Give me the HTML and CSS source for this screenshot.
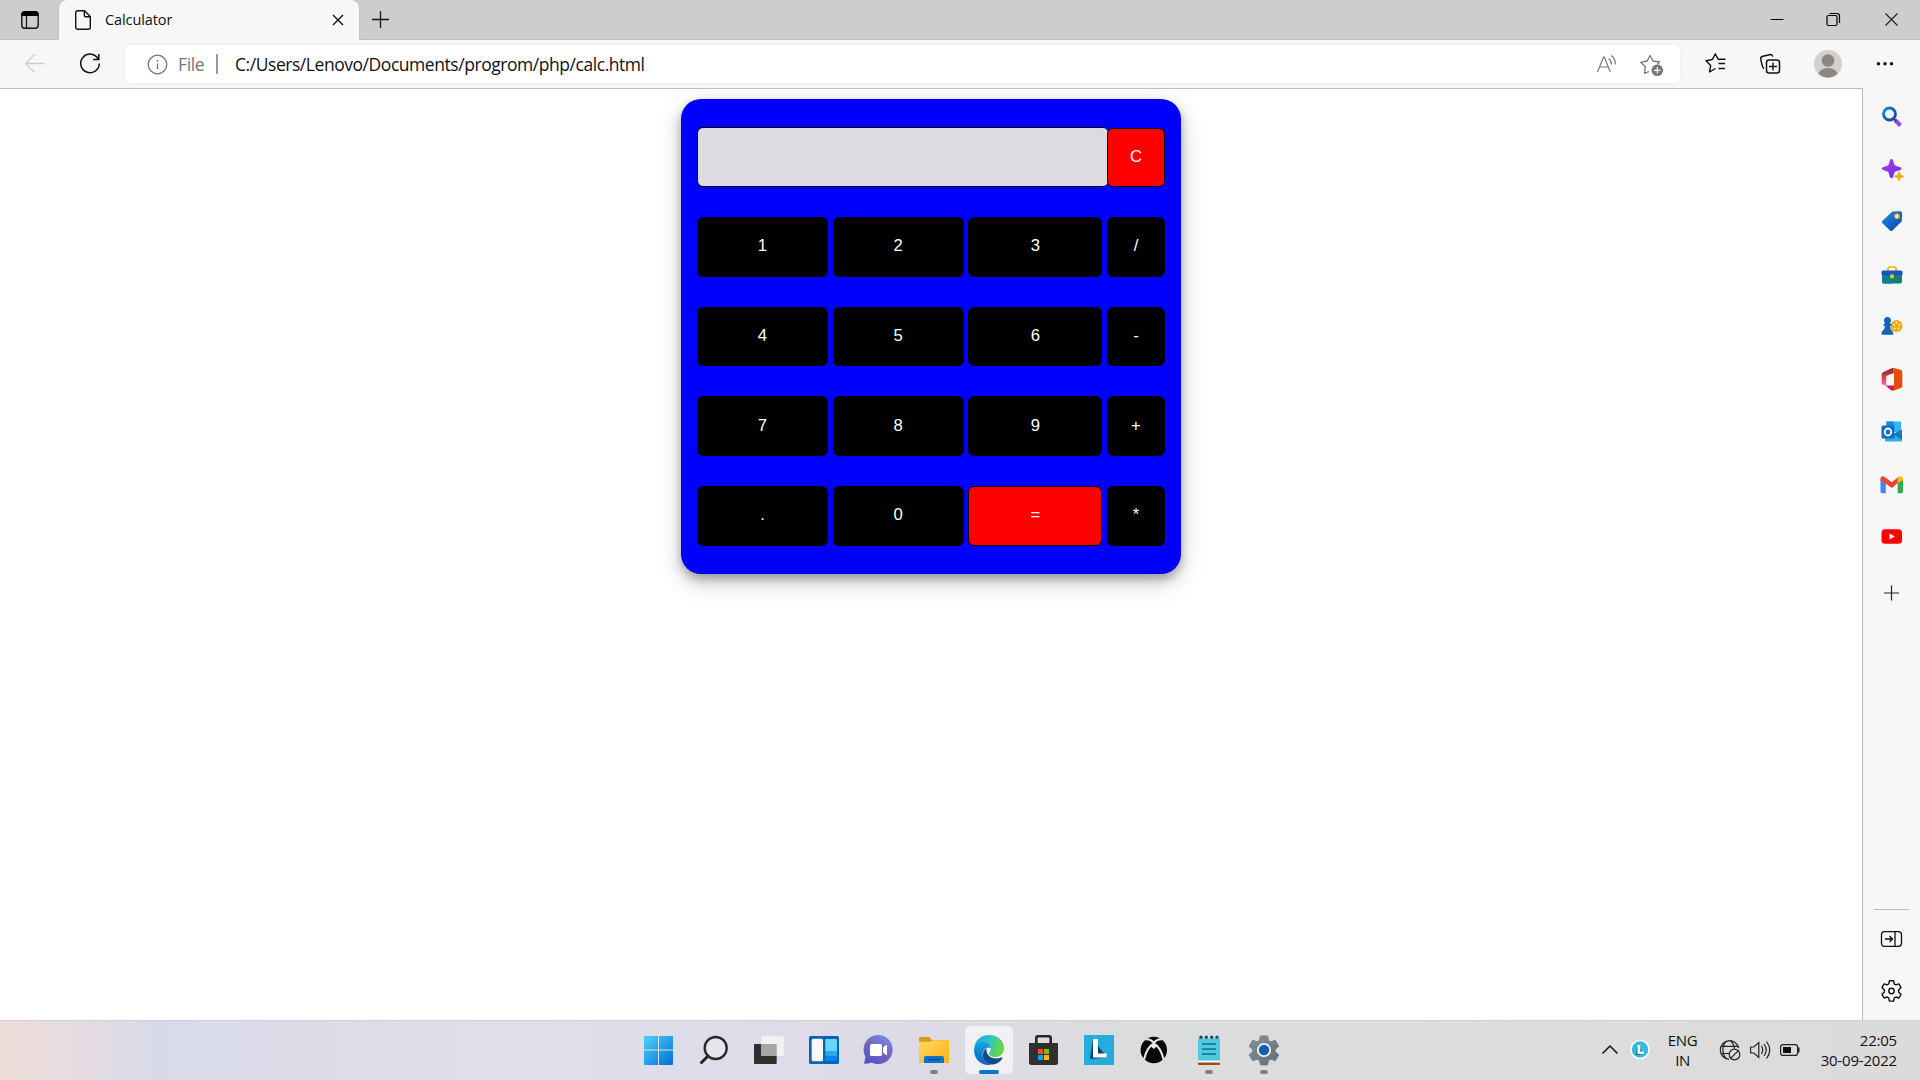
FILE: index.html
```html
<!DOCTYPE html>
<html lang="en">
<head>
<meta charset="utf-8">
<title>Calculator</title>
<link rel="stylesheet" href="styles.css">
</head>
<body>
<header class="tabstrip">
  <svg class="tab-actions" viewBox="0 0 59 40"><rect x="21.8" y="11.8" width="16.4" height="16.4" rx="3" fill="none" stroke="#111" stroke-width="1.4"/><path d="M21.5 16v-1.500a3.500 3.500 0 0 1 3.500-3.500h10a3.500 3.500 0 0 1 3.500 3.500V16z" fill="#000"/><path d="M26.500 16v12" stroke="#111" stroke-width="1.200"/></svg>
  <div class="tab">
    <svg class="tab-doc" viewBox="0 0 18 22"><path d="M3.500 1.700h7l5.800 5.800v10.800a2 2 0 0 1-2 2H3.700a2 2 0 0 1-2-2V3.700a2 2 0 0 1 1.800-2zM10.300 2v4.200a1.500 1.500 0 0 0 1.500 1.500H16" fill="none" stroke="#111" stroke-width="1.400"/></svg>
    <span class="tab-title">Calculator</span>
    <svg class="tab-close" viewBox="0 0 12 12"><path d="M1 1l10 10M11 1L1 11" stroke="#111" stroke-width="1.400"/></svg>
  </div>
  <svg class="new-tab" viewBox="0 0 43 40"><path d="M13 19.500h17M21.500 11v17" stroke="#111" stroke-width="1.300"/></svg>
  <div class="window-buttons">
    <svg viewBox="0 0 57.500 40"><path d="M22.500 19.500h13" stroke="#000"/></svg>
    <svg viewBox="0 0 57.500 40"><rect x="22" y="15.500" width="10" height="10" rx="1.500" fill="none" stroke="#000" stroke-width="1.200"/><path d="M24.500 13.500h7.500a2.500 2.500 0 0 1 2.500 2.500v7" fill="none" stroke="#000" stroke-width="1.200"/></svg>
    <svg viewBox="0 0 57.500 40"><path d="M22.500 13.500l12 12M34.500 13.500l-12 12" stroke="#222" stroke-width="1.200"/></svg>
  </div>
</header>

<nav class="toolbar">
  <svg class="nav-back" viewBox="0 0 70 48"><path d="M44.500 23.500H26M34.500 14.500l-9 9 9 9" fill="none" stroke="#ccc" stroke-width="1.400"/></svg>
  <svg class="nav-reload" viewBox="0 0 40 48"><path d="M28.300 19.200A9.300 9.300 0 1 0 29.300 23.500M28.800 14v5.500h-5.600" fill="none" stroke="#111" stroke-width="1.500"/></svg>
  <div class="address">
    <svg class="info" viewBox="0 0 25 37"><circle cx="12.500" cy="18.500" r="9.300" fill="none" stroke="#767676" stroke-width="1.300"/><path d="M12.500 17.500v5.500M12.500 14v1.700" stroke="#767676" stroke-width="1.400"/></svg>
    <span class="scheme">File</span>
    <span class="separator"></span>
    <span class="url">C:/Users/Lenovo/Documents/progrom/php/calc.html</span>
    <svg class="read-aloud" viewBox="0 0 45 37"><g fill="none" stroke="#777" stroke-width="1.200"><path d="M13.500 26l6-15h.8l6 15M15.700 21h8.500M24.500 12.500q3 2 3 6M27 9.500q4.500 3 4.300 9"/></g></svg>
    <svg class="add-favorite" viewBox="0 0 46 37"><path d="M20 25.500l-4.500 1.800.8-6.500-4.600-4.500 6.500-1.300L21 9.500l3 5.500 6.500 1-2.200 2.500" fill="none" stroke="#777" stroke-width="1.300" stroke-linejoin="round"/><circle cx="28.300" cy="24.300" r="5.800" fill="#777"/><path d="M25 24.300h6.600M28.300 21v6.600" stroke="#fff" stroke-width="1.200"/></svg>
  </div>
  <svg class="favorites" viewBox="0 0 70 48"><path d="M35.500 28.500l-6 3.500 1.200-6.500-4.700-4.800 6.300-1.200 3-5.600 2.800 5.400h7.400M38.500 23.500H45M38.500 28.500H45" fill="none" stroke="#111" stroke-width="1.400" stroke-linejoin="round"/></svg>
  <svg class="collections" viewBox="0 0 40 48"><rect x="16.500" y="20" width="13" height="13" rx="2.500" fill="none" stroke="#111" stroke-width="1.500"/><path d="M23 22.500v8M19 26.500h8M14 28.500c-1.300-.6-1.500-1.500-1.700-2.500l-1.500-6.500c-.3-1.800.5-3 2-3.300l6.800-1.500c1.700-.4 2.800.3 3.200 2" fill="none" stroke="#111" stroke-width="1.400"/></svg>
  <svg class="profile" viewBox="0 0 76 48"><defs><clipPath id="face"><circle cx="38" cy="24" r="13.500"/></clipPath></defs><circle cx="38" cy="24" r="14" fill="#d2d0ce"/><g fill="#8a8683" clip-path="url(#face)"><circle cx="38" cy="20.500" r="6.300"/><ellipse cx="38" cy="36" rx="10" ry="8"/></g></svg>
  <svg class="more" viewBox="0 0 38 48"><g fill="#111"><circle cx="12.500" cy="23.700" r="1.700"/><circle cx="19" cy="23.700" r="1.700"/><circle cx="25.500" cy="23.700" r="1.700"/></g></svg>
</nav>

<div class="workspace">
  <main class="page">
    <form class="calculator">
      <div class="screen-row"><input class="display" type="text" aria-label="Display"><button class="key key-red" type="button">C</button></div>
      <div class="key-row"><button class="key" type="button">1</button><button class="key" type="button">2</button><button class="key" type="button">3</button><button class="key" type="button">/</button></div>
      <div class="key-row"><button class="key" type="button">4</button><button class="key" type="button">5</button><button class="key" type="button">6</button><button class="key" type="button">-</button></div>
      <div class="key-row"><button class="key" type="button">7</button><button class="key" type="button">8</button><button class="key" type="button">9</button><button class="key" type="button">+</button></div>
      <div class="key-row"><button class="key" type="button">.</button><button class="key" type="button">0</button><button class="key key-red" type="button">=</button><button class="key" type="button">*</button></div>
    </form>
  </main>

  <aside class="sidebar">
    <div class="sidebar-apps">
      <svg viewBox="0 0 24 24"><defs><linearGradient id="lens" x2="1" y2="1"><stop stop-color="#1684e0"/><stop offset="1" stop-color="#123f9e"/></linearGradient></defs><path d="M15 16l5.500 5.500" stroke="#8a4be8" stroke-width="4"/><path d="M13.800 14.800l2.200 2.200" stroke="#444" stroke-width="2"/><circle cx="9.500" cy="10" r="6" fill="#eef8ff" stroke="url(#lens)" stroke-width="2.800"/></svg>
      <svg viewBox="0 0 24 24"><defs><linearGradient id="spark" x2="1" y2="1"><stop stop-color="#b040f8"/><stop offset="1" stop-color="#6130d8"/></linearGradient></defs><path d="M11.500 2c1.500 0 1.800 2 2.500 4.500.5 1.700 1 2.200 3 2.800 2.500.7 4.500 1 4.500 2.300s-2 1.700-4.500 2.400c-2 .5-2.500 1-3 2.800-.7 2.700-1 4.500-2.500 4.500s-1.800-1.800-2.500-4.500c-.5-1.800-1-2.300-3-2.800-2.500-.7-4.300-1.200-4.300-2.400s1.800-1.600 4.300-2.300c2-.6 2.500-1.100 3-2.800.7-2.500 1-4.500 2.500-4.500z" fill="url(#spark)"/><path d="M19 14.200l1.500 3.600 3.800 1.500-3.800 1.500L19 24.300l-1.500-3.500-3.800-1.500 3.800-1.500z" fill="#f9ad12" stroke="#f9ad12" stroke-width=".5" stroke-linejoin="round"/></svg>
      <svg viewBox="0 0 24 24"><defs><linearGradient id="tag" x2="1" y2="1"><stop stop-color="#1590df"/><stop offset="1" stop-color="#173eae"/></linearGradient></defs><path d="M12.500 2.500l7.800-.3q1.700 0 1.800 1.600l-.3 8.500-9.300 9.300q-1.200 1-2.500 0l-7.500-7.300q-1-1.200 0-2.500z" fill="url(#tag)"/><circle cx="17" cy="7.300" r="2" fill="#fff" stroke="#ffc235" stroke-width="1.400"/></svg>
      <svg viewBox="0 0 24 24"><path d="M8 9V6.500q0-1.500 1.500-1.500h5q1.500 0 1.500 1.500V9" fill="none" stroke="#f5ad13" stroke-width="1.700"/><path d="M2 12h20v7.500q0 2-2 2H4q-2 0-2-2z" fill="#108070"/><path d="M2 12h10v9.500H4q-2 0-2-2z" fill="#0b8090"/><rect x="1.500" y="8.500" width="21" height="5" rx="1.500" fill="#1258bb"/><rect x="10.300" y="12.500" width="3.500" height="3.700" fill="#ffc02a"/></svg>
      <svg viewBox="0 0 24 24"><circle cx="16.500" cy="12" r="6" fill="#efa713"/><g fill="#fff5d0"><circle cx="16.500" cy="8.800" r="1"/><circle cx="19.500" cy="10.700" r="1"/><circle cx="18.500" cy="14.500" r="1"/><circle cx="14.500" cy="14.500" r="1"/><circle cx="14" cy="10.700" r="1"/></g><path d="M7.500 3a3.600 3.600 0 0 1 2.500 6.200l1.500 1v1.500H10q0 3.500 2.500 5.500.8.700.8 3.500H1.500q0-2.800.8-3.500Q5 15.200 5 11.700H3.500v-1.500l1.500-1A3.600 3.600 0 0 1 7.500 3z" fill="#1463b5"/></svg>
      <svg viewBox="0 0 24 24"><defs><linearGradient id="office" x2="0" y2="1"><stop stop-color="#8e1e23"/><stop offset=".5" stop-color="#d53f42"/><stop offset="1" stop-color="#ef70ad"/></linearGradient></defs><path d="M13 .8L3.500 5q-1.800.8-1.800 2.500v9.800l4.500 1.200V9L14 6z" fill="url(#office)"/><path d="M13 .8l7.500 2q1.800.6 1.800 2.400v13.700q0 1.800-1.800 2.300L13 23.800l1-3.800V6z" fill="#e74c0c"/><path d="M5.500 18.500H14v4.700q-1.500.8-3 0z" fill="#c91954"/></svg>
      <svg viewBox="0 0 24 24"><path d="M6.500 2.500H21V13H6.500z" fill="#31b6ef"/><path d="M6.500 2.500h7.200V8H6.500z" fill="#148bd7"/><path d="M5 12l9 3 8-4.500V21q0 1.500-1.500 1.500h-14Q5 22.500 5 21z" fill="#32a9e7"/><path d="M13 15l9 6V10.500z" fill="#1478bd"/><rect x="1.500" y="6.500" width="13" height="13" rx="1.500" fill="#0f6fc6"/><ellipse cx="8" cy="13" rx="3.200" ry="3.500" fill="none" stroke="#fff" stroke-width="1.800"/></svg>
      <svg viewBox="0 0 24 24"><path d="M.5 7l5.300 3.500v10.700H2.500q-2 0-2-1.700z" fill="#4285f4"/><path d="M17.700 10.500L23 7v12.500q0 1.700-1.500 1.700h-3.800z" fill="#34a853"/><path d="M.5 8.500V7.200Q.5 4.300 2.800 4.300q1 0 1.800.6l7.200 5.300 6.600-5.300v5.700L11.800 16 5.600 11.500z" fill="#ea4335"/><path d="M17.700 11.400V5.500l1-.8q1.500-.8 3 0Q23 5.500 23 7v.8z" fill="#fbbc04"/></svg>
      <svg viewBox="0 0 24 24"><rect x="1.500" y="5.200" width="20.500" height="14.500" rx="3.500" fill="#f00"/><path d="M9.500 9.500l5.400 3-5.400 3z" fill="#fff"/></svg>
      <svg class="sidebar-add" viewBox="0 0 24 24"><path d="M4 12h15M11.500 4.500v15" stroke="#222" stroke-width="1.200"/></svg>
    </div>
    <div class="sidebar-tools">
      <svg viewBox="0 0 24 24"><path d="M4.500 4.700h14q3 0 3 3v8.600q0 3-3 3h-14q-3 0-3-3V7.700q0-3 3-3zM15 5v14M5 12h7.300M9.500 9l3 3-3 3" fill="none" stroke="#111" stroke-width="1.300"/></svg>
      <svg viewBox="0 0 24 24"><path d="M9.400 1.800h4.200l.7 3.200 1.500.9 3.100-1 2.100 3.600L18.600 11v2l2.400 2.300-2.100 3.700-3.100-1-1.500.9-.7 3.200H9.400l-.7-3.200-1.500-.9-3.100 1L2 15.300 4.400 13v-2L2 8.500l2.100-3.600 3.100 1L8.700 5z" fill="none" stroke="#111" stroke-width="1.400" stroke-linejoin="round"/><circle cx="11.500" cy="12" r="2.700" fill="none" stroke="#111" stroke-width="1.400"/></svg>
    </div>
  </aside>
</div>

<footer class="taskbar">
  <div class="taskbar-apps">
    <svg viewBox="0 0 55 60"><defs><linearGradient id="win" gradientUnits="userSpaceOnUse" x1="13" y1="16" x2="42" y2="45"><stop stop-color="#4fd0ff"/><stop offset="1" stop-color="#0070cf"/></linearGradient></defs><path d="M14 16h13v13.500H13V17q0-1 1-1zM28 16h13q1 0 1 1v12.500H28zM13 30.500h14V45H14q-1 0-1-1zM28 30.500h14V44q0 1-1 1H28z" fill="url(#win)"/></svg>
    <svg viewBox="0 0 55 60"><circle cx="29.700" cy="28" r="11" fill="#e6e6ec" stroke="#2a2a2a" stroke-width="2.400"/><path d="M22 36l-6.500 6.500" stroke="#222" stroke-width="3" stroke-linecap="round"/></svg>
    <svg viewBox="0 0 55 60"><rect x="13" y="24" width="22.700" height="20" rx="1" fill="#30302f"/><rect x="20.300" y="16" width="22.500" height="20" rx="1" fill="#f3f3f3" opacity=".9"/><path d="M20.300 24h15.400v12H20.300z" fill="#a5a5a5"/></svg>
    <svg viewBox="0 0 55 60"><rect x="13" y="16" width="30" height="28" rx="1.500" fill="#0a64b4"/><rect x="15.700" y="18.700" width="11.300" height="22.500" rx="1.500" fill="#f7f7f7"/><path d="M29.300 19H40a1 1 0 0 1 1 1v11H29.300z" fill="#68d5fc"/><path d="M29.300 31H41v5H29.300z" fill="#28a7f4"/><path d="M29.300 36H41v4a1 1 0 0 1-1 1H29.300z" fill="#0785ed"/></svg>
    <svg viewBox="0 0 55 60"><defs><linearGradient id="chat" x1=".2" y1="1" x2=".8" y2="0"><stop offset=".1" stop-color="#5558c8"/><stop offset=".5" stop-color="#7565bd"/><stop offset="1" stop-color="#748bea"/></linearGradient></defs><path d="M13 43.800l1.500-7A14.600 14.600 0 1 1 20.500 42.500q-3 1.500-7.500 1.300z" fill="url(#chat)"/><rect x="19" y="24" width="12" height="12" rx="1.500" fill="#fff"/><path d="M32 27.500l3-2.500q1-.5 1 .5v9q0 1-1 .5l-3-2.500z" fill="#fff"/></svg>
    <svg viewBox="0 0 55 60"><defs><linearGradient id="folder" x2="1" y2="1"><stop stop-color="#ffd665"/><stop offset="1" stop-color="#fcb414"/></linearGradient></defs><path d="M13 18q0-1 1-1h9.500l2.500 3h16v8H13z" fill="#dc9b0c"/><path d="M13 21.700h11l2.500-1.500H42q1 0 1 1V43H13z" fill="url(#folder)"/><path d="M18 43v-5q0-2 2-2h16q2 0 2 2v5z" fill="#0c72c8"/><path d="M22 39.500h12" stroke="#074b8b" stroke-width="1.300"/><rect class="running" x="24" y="50" width="8" height="4" rx="2"/></svg>
    <svg viewBox="0 0 55 60"><defs><linearGradient id="edge-top" x2="1" y2=".25"><stop stop-color="#16a9df"/><stop offset=".5" stop-color="#27c4cd"/><stop offset="1" stop-color="#6bd642"/></linearGradient><linearGradient id="edge-side" x2="0" y2="1"><stop stop-color="#1aa0e5"/><stop offset="1" stop-color="#0964c0"/></linearGradient></defs><rect class="active" x="4" y="6" width="48" height="48" rx="5"/><path d="M13 29C14 20 20 15 28 15c9 0 15 6 15 13 0 6-4 9-9 9-4 0-6-1.500-6-3s1.700-2 1.700-5c0-3.500-3.500-6-8-6-4 0-7 2.500-8.700 6z" fill="url(#edge-top)"/><path d="M13 30c.5-5 4-8 9-8 4.500 0 7.500 2.800 7.700 6-3.700-2-8.200 2-8.200 7 0 5 4 9 9 9.700C20 46.500 13 39 13 30z" fill="url(#edge-side)"/><path d="M25.500 28.300C18 34 22.500 45 32 44.500c4-.4 7.500-2.800 9.300-6 .4-.8-.2-1.300-1-.9-7.800 3-15.800-1-14.800-9.300z" fill="#114a8b"/><rect x="18" y="50" width="20" height="4" rx="2" fill="#0078d4"/></svg>
    <svg viewBox="0 0 55 60"><path d="M20.300 24v-6q0-1.700 1.700-1.700h11q1.700 0 1.700 1.700v6" fill="none" stroke="#262626" stroke-width="2.600"/><path d="M13 23h29v19.500q0 2.500-2.500 2.500h-24Q13 45 13 42.500z" fill="#303030"/><path d="M22 29h5v5h-5z" fill="#f25022"/><path d="M28 29h5v5h-5z" fill="#7fba00"/><path d="M22 35h5v5h-5z" fill="#00a4ef"/><path d="M28 35h5v5h-5z" fill="#ffb900"/></svg>
    <svg viewBox="0 0 55 60"><path d="M13 15h30v30H13z" fill="#25abdc"/><path d="M22 19l-3 20 17-1.500z" fill="#103e6b"/><path d="M22 19h5v14.500h8.700v4H22z" fill="#fff"/></svg>
    <svg viewBox="0 0 55 60"><circle cx="27.800" cy="30" r="13.200" fill="#080808"/><path d="M19.500 19.500c3-.8 6 .8 8.300 3.200 2.300-2.400 5.300-4 8.300-3.200M27.800 23.500C24 25.500 20 31 18 39.500M27.800 23.500c3.800 2 7.800 7.500 9.800 16" fill="none" stroke="#e7e7e7" stroke-width="2"/><path d="M27.800 23l3.500 3-3.500 3-3.500-3z" fill="#e7e7e7"/></svg>
    <svg viewBox="0 0 55 60"><path d="M17 42h22v2q0 1-1 1H18q-1 0-1-1z" fill="#9b4e12"/><path d="M17 40.500h22v2H17z" fill="#fff"/><path d="M17 18.500h22v22H18q-1 0-1-1z" fill="#50c8df"/><g fill="#15556c"><circle cx="20" cy="17.300" r="1.700"/><circle cx="25.300" cy="17.300" r="1.700"/><circle cx="30.700" cy="17.300" r="1.700"/><circle cx="36" cy="17.300" r="1.700"/></g><path d="M21 24h14M21 29h14M21 34h14" stroke="#08718a" stroke-width="1.700"/><rect class="running" x="24" y="50" width="8" height="4" rx="2"/></svg>
    <svg viewBox="0 0 55 60"><defs><linearGradient id="cog" x2="1" y2="1"><stop stop-color="#899198"/><stop offset="1" stop-color="#626b74"/></linearGradient></defs><path d="M24.500 16h7l1 4.500 2.300 1.300 4.500-1.500 3.500 6-3.500 3v2.500l3.500 3-3.500 6-4.500-1.500-2.300 1.300-1 4.400h-7l-1-4.400-2.300-1.300-4.500 1.500-3.500-6 3.500-3v-2.500l-3.500-3 3.500-6 4.500 1.500 2.300-1.300z" fill="url(#cog)" stroke="#7b838a" stroke-linejoin="round"/><circle cx="28" cy="30" r="7" fill="#f5f5f5"/><circle cx="28" cy="30" r="5.200" fill="#0b60b6"/><rect class="running" x="24" y="50" width="8" height="4" rx="2"/></svg>
  </div>
  <div class="tray">
    <svg class="tray-more" viewBox="0 0 30 60"><path d="M7.500 33.500l7.500-7.500 7.500 7.500" fill="none" stroke="#111" stroke-width="1.500"/></svg>
    <svg class="tray-app" viewBox="0 0 30 60"><circle cx="15" cy="29.500" r="9" fill="#35badb" stroke="#fff" stroke-width="1.500"/><path d="M12.500 25l-1.500 10 8-1z" fill="#175987"/><path d="M12.500 25h2.700v6.500H19V34h-6.500z" fill="#fff"/></svg>
    <div class="language"><span>ENG</span><span>IN</span></div>
    <svg class="status" viewBox="0 0 90 60"><g fill="none" stroke="#222" stroke-width="1.200"><path d="M28.700 28A9.300 9.300 0 1 0 19 39.300M16.500 21c-5 5-4.500 13 0 18M20 20.500q4.300 3.500 4.300 8M11 26.300h17.700M11 33.500h8"/><circle cx="24.500" cy="34.500" r="5.300"/><path d="M20.800 38.200l7.500-7.500"/><path d="M40.600 27h3.200l5-4.500v15l-5-4.500h-3.200zM51.500 26q2.500 4 0 8M54 24q4.500 6 0 12M56.500 21.500q6.500 8.500 0 17"/><rect x="70.600" y="24.600" width="17" height="10.800" rx="2.500"/></g><rect x="73" y="27" width="8" height="6" fill="#111"/><path d="M88.500 27.500v5" stroke="#222" stroke-width="2"/></svg>
    <div class="clock"><span>22:05</span><span>30-09-2022</span></div>
  </div>
</footer>
</body>
</html>
```

FILE: styles.css
```css
* { box-sizing: border-box; }

body {
  display: flex;
  flex-direction: column;
  width: 1920px;
  height: 1080px;
  margin: 0;
  overflow: hidden;
  background: #fff;
  font-family: "Open Sans", "Noto Sans", sans-serif;
  color: #111;
}

svg { display: block; flex: none; }

/* Tab strip */
.tabstrip {
  display: flex;
  flex: none;
  height: 40px;
  background: #cdcdcd;
  box-shadow: inset 0 -1px #bdbdbd;
}
.tab-actions { width: 59px; height: 40px; }
.tab {
  display: flex;
  align-items: center;
  width: 300px;
  padding: 0 15px;
  background: #f7f7f7;
  border-radius: 8px 8px 0 0;
  box-shadow: 0 0 2px #aaa;
}
.tab-doc { width: 18px; height: 22px; }
.tab-title {
  flex: 1;
  margin-left: 13px;
  font-size: 14.5px;
  letter-spacing: -0.1px;
  line-height: 40px;
}
.tab-close { width: 12px; height: 12px; }
.new-tab { width: 43px; height: 40px; }
.window-buttons { display: flex; margin-left: auto; }
.window-buttons svg { width: 57.5px; height: 40px; }

/* Toolbar */
.toolbar {
  display: flex;
  flex: none;
  height: 48px;
  background: #f7f7f7;
}
.nav-back, .favorites { width: 70px; height: 48px; }
.nav-reload, .collections { width: 40px; height: 48px; }
.profile { width: 76px; height: 48px; }
.more { width: 38px; height: 48px; }
.address {
  display: flex;
  align-items: center;
  width: 1555px;
  height: 38px;
  margin: 5px 0 0 15px;
  padding: 0 5px 0 20px;
  background: #fff;
  border-radius: 5px;
  box-shadow: 0 0 4px #e8e8e8;
  font-size: 17.5px;
  line-height: 36px;
}
.info { width: 25px; height: 37px; }
.scheme { width: 38px; margin-left: 8px; color: #767676; letter-spacing: -0.4px; }
.separator { width: 2px; height: 20px; background: #999; }
.url { margin-left: 17px; letter-spacing: -0.45px; white-space: nowrap; }
.read-aloud { width: 45px; height: 37px; margin-left: auto; }
.add-favorite { width: 46px; height: 37px; }

/* Page and sidebar */
.workspace { display: flex; height: 932px; background: #f7f7f7; }
.page {
  width: 1863px;
  padding-top: 10px;
  background: #fff;
  border-top: 1px solid #bdbdbd;
  border-right: 1px solid #bdbdbd;
  overflow: hidden;
}
.sidebar {
  display: flex;
  flex: 1;
  flex-direction: column;
  justify-content: space-between;
  align-items: center;
  padding-top: 2px;
}
.sidebar svg { width: 24px; height: 24px; }
.sidebar-apps { display: flex; flex-direction: column; gap: 28.5px; padding-top: 14px; }
.sidebar-apps .sidebar-add { margin-top: 4px; }
.sidebar-tools {
  display: flex;
  flex-direction: column;
  align-items: center;
  gap: 28px;
  width: 35px;
  padding: 17px 0 17px;
  border-top: 1px solid #bdbdbd;
}

/* Calculator */
.calculator {
  display: flex;
  flex-direction: column;
  gap: 30px;
  width: 500px;
  margin: 0 auto;
  padding: 28px 16px;
  background: #00f;
  border-radius: 20px;
  box-shadow: 0 5px 10px rgba(0, 0, 0, .28), 0 8px 25px rgba(0, 0, 0, .2);
}
.screen-row { display: flex; align-items: flex-end; height: 60px; }
.display {
  width: 412px;
  height: 60px;
  padding: 0 10px;
  background: #dcdbe1;
  border: 1px solid #000;
  border-radius: 6px;
}
.key-row {
  display: grid;
  grid-template-columns: 131px 131px 134px 58px;
  justify-content: space-between;
}
.key {
  height: 59.7px;
  padding: 0 0 1px;
  background: #000;
  border: 1px solid #000;
  border-radius: 6px;
  color: #fff;
  font: 16.67px "Liberation Sans", Arial, sans-serif;
}
.key-red { background: #f00; }
.screen-row .key { width: 58px; height: 59px; margin-left: -2px; padding-bottom: 2px; }

/* Taskbar */
.taskbar {
  display: flex;
  flex: none;
  height: 60px;
  padding-left: 631px;
  background: linear-gradient(90deg, #efddd9 0, #e8dcdf 60px, #d9dae8 150px, #dfdeea 500px, #dddbe8 850px, #dbdcdd 1150px, #dedcdd 1550px, #dbdbdb 100%);
  box-shadow: inset 0 1px #cfcfd8;
}
.taskbar-apps { display: flex; }
.taskbar-apps svg { width: 55px; height: 60px; }
.active { fill: #f0f0f5; }
.running { fill: #828286; }
.tray {
  display: flex;
  margin-left: auto;
  padding-right: 23px;
  font-size: 15px;
  line-height: 20px;
}
.tray-more, .tray-app { width: 30px; height: 60px; }
.language, .clock { display: flex; flex-direction: column; padding-top: 10px; }
.language { align-items: center; width: 55px; letter-spacing: -0.4px; }
.status { width: 90px; height: 60px; }
.clock { align-items: flex-end; width: 97px; letter-spacing: -0.2px; }
```
